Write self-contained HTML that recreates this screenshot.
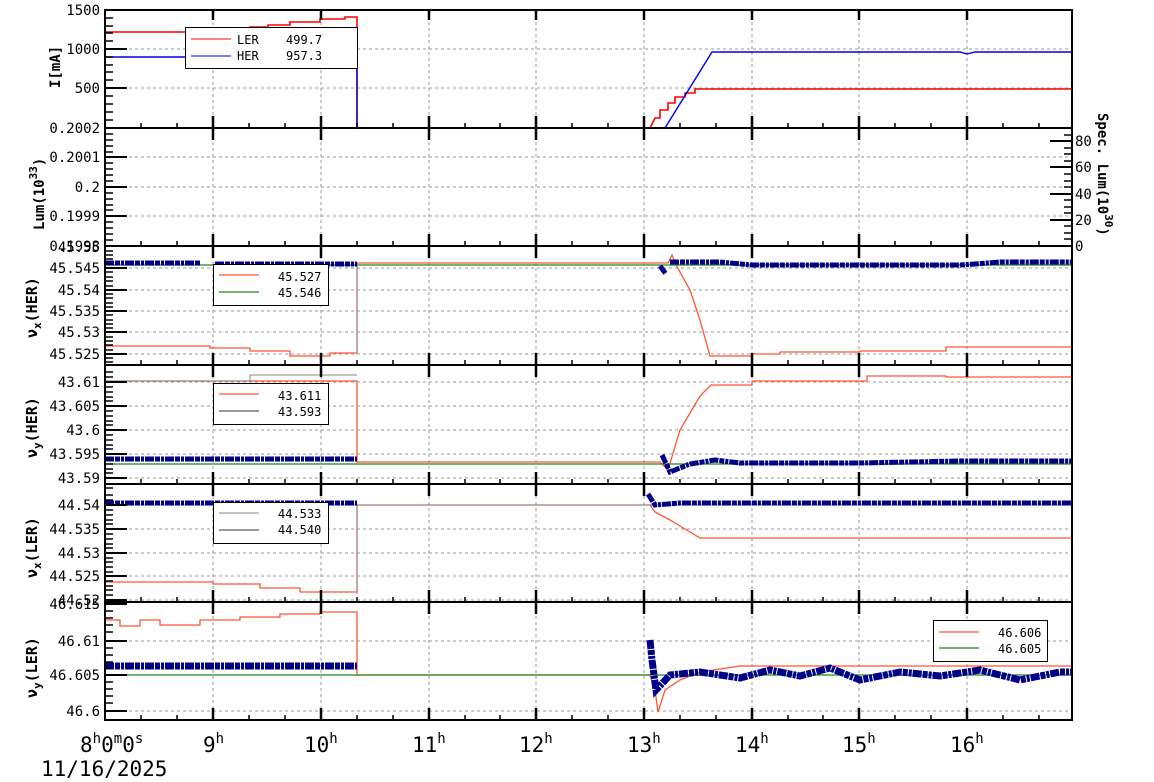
<!DOCTYPE html>
<html><head><meta charset="utf-8"><style>
html,body{margin:0;padding:0;background:#fff;width:1154px;height:782px;overflow:hidden}
svg{display:block}
text{font-family:"DejaVu Sans Mono","Liberation Mono",monospace;fill:#000}
.t{font-size:14px}
.g{stroke:#999;stroke-width:1;stroke-dasharray:3,3;fill:none}
.ax{stroke:#000;stroke-width:2;fill:none}
.r{stroke:#ff5533;stroke-width:1.3;fill:none}
.rr{stroke:#f00;stroke-width:1.6;fill:none}
.b{stroke:#0000ee;stroke-width:1.4;fill:none}
.gr{stroke:#1a8a1a;stroke-width:1.3;fill:none}
.gy{stroke:#888;stroke-width:1;fill:none}
.d{stroke:#000088;stroke-width:5;fill:none;stroke-dasharray:9,1,5,1,3,1}
</style></head><body>
<svg width="1154" height="782" viewBox="0 0 1154 782" xmlns="http://www.w3.org/2000/svg">
<g class="g">
<path d="M213 10V720M321 10V720M429 10V720M536 10V720M644 10V720M752 10V720M859 10V720M967 10V720"/>
<path d="M105 49H1072M105 88H1072"/>
<path d="M105 157H1072M105 187H1072M105 216H1072"/>
<path d="M105 268H1072M105 290H1072M105 311H1072M105 332H1072M105 354H1072"/>
<path d="M105 382H1072M105 406H1072M105 430H1072M105 454H1072M105 478H1072"/>
<path d="M105 529H1072M105 553H1072M105 576H1072M105 600H1072"/>
<path d="M105 641H1072M105 711H1072"/>
</g>

<path class="rr" d="M105 32H213V29H250V27H268V25H290V22H320V19H345V17H357V128H650L655 118H660V110H668V103H675V97H685V93H695V89H1072"/>
<path class="b" d="M105 57H213V55H250V52H268V49H290V48H330V50H357V128H665L712 52H960L967 54L975 52H1072"/>
<rect x="185.5" y="27.5" width="172" height="41" fill="#fff" stroke="#000"/>
<line x1="191" y1="39" x2="231" y2="39" stroke="#f00"/>
<line x1="191" y1="56" x2="231" y2="56" stroke="#00e"/>
<text x="237" y="44" style="font-size:12px">LER</text>
<text x="286" y="44" style="font-size:12px">499.7</text>
<text x="237" y="60" style="font-size:12px">HER</text>
<text x="286" y="60" style="font-size:12px">957.3</text>

<path class="r" d="M105 346H210V348H250V351H290V356H330V353H357V263H668L672 255L676 265L690 290L700 320L710 356H752V354H780V352H860V351H946V347H1072"/>
<path class="gy" d="M357 263V354"/>
<path class="gr" d="M105 265H1072"/>
<path class="d" d="M105 263H200M215 264H357M660 266L666 274M670 262H720L752 265H960L975 264L1000 262H1072"/>
<rect x="213.5" y="264.5" width="115" height="41" fill="#fff" stroke="#000"/>
<line x1="219" y1="275" x2="259" y2="275" class="r"/>
<line x1="219" y1="292" x2="259" y2="292" class="gr"/>
<text x="278" y="281" style="font-size:12px">45.527</text>
<text x="278" y="297" style="font-size:12px">45.546</text>

<path class="r" d="M105 381H357V462H660L668 470L680 430L700 396L711 385H752V381H867V376H946V377H1072"/>
<path class="gy" d="M105 381H250V375H357"/>
<path class="gr" d="M105 464H1072"/>
<path class="d" d="M105 459H357M662 455L670 472L690 464L715 460L740 463H860L960 461H1072"/>
<rect x="213.5" y="383.5" width="115" height="41" fill="#fff" stroke="#000"/>
<line x1="219" y1="394" x2="259" y2="394" class="r"/>
<line x1="219" y1="411" x2="259" y2="411" stroke="#333"/>
<text x="278" y="400" style="font-size:12px">43.611</text>
<text x="278" y="416" style="font-size:12px">43.593</text>

<path class="r" d="M105 582H213V584H260V588H300V592H357V505H650L655 512L670 520L680 526L700 538H1072"/>
<path class="gy" d="M105 505H1072M357 505V594"/>
<path class="d" d="M105 503H357M648 494L655 505L680 503H1072"/>
<rect x="213.5" y="502.5" width="115" height="41" fill="#fff" stroke="#000"/>
<line x1="219" y1="513" x2="259" y2="513" class="gy"/>
<line x1="219" y1="530" x2="259" y2="530" stroke="#333"/>
<text x="278" y="518" style="font-size:12px">44.533</text>
<text x="278" y="534" style="font-size:12px">44.540</text>

<path class="r" d="M105 620H120V626H140V620H160V625H200V620H240V617H280V614H320V612H357V675H650L655 690L658 712L665 690L680 680L700 672L740 666H800L860 666H1072"/>
<path class="gr" d="M105 675H1072"/>
<path class="d" style="stroke-width:7" d="M105 666H357M650 640L652 660L656 690L670 675L700 672L740 678L770 670L800 676L830 668L860 680L900 672L940 676L980 670L1020 680L1060 672H1072"/>
<rect x="933.5" y="620.5" width="114" height="41" fill="#fff" stroke="#000"/>
<line x1="939" y1="632" x2="979" y2="632" class="r"/>
<line x1="939" y1="648" x2="979" y2="648" class="gr"/>
<text x="998" y="637" style="font-size:12px">46.606</text>
<text x="998" y="653" style="font-size:12px">46.605</text>

<g class="ax">
<rect x="105" y="10" width="967" height="710"/>
<path d="M105 128H1072M105 246H1072M105 365H1072M105 484H1072M105 602H1072"/>
</g>
<g stroke="#000" stroke-width="2">
<path d="M105 10h22M105 49h22M105 88h22M105 157h22M105 187h22M105 216h22M105 268h22M105 290h22M105 311h22M105 332h22M105 354h22M105 382h22M105 406h22M105 430h22M105 454h22M105 478h22M105 505h22M105 529h22M105 553h22M105 576h22M105 600h22M105 604h22M105 641h22M105 675h22M105 711h22"/>
<path d="M1072 141h-22M1072 167h-22M1072 194h-22M1072 220h-22M1072 246h-22"/>
</g>
<g stroke="#000" stroke-width="1.5">
<path d="M105 18h8M105 26h8M105 33h8M105 41h8M105 57h8M105 65h8M105 72h8M105 80h8M105 96h8M105 104h8M105 112h8M105 120h8M105 134h8M105 140h8M105 146h8M105 152h8M105 163h8M105 169h8M105 175h8M105 181h8M105 193h8M105 199h8M105 205h8M105 210h8M105 222h8M105 228h8M105 234h8M105 240h8M105 251h8M105 255h8M105 259h8M105 264h8M105 272h8M105 277h8M105 281h8M105 286h8M105 294h8M105 298h8M105 303h8M105 307h8M105 315h8M105 320h8M105 324h8M105 328h8M105 337h8M105 341h8M105 345h8M105 350h8M105 358h8M105 362h8M105 372h8M105 377h8M105 387h8M105 392h8M105 397h8M105 401h8M105 411h8M105 416h8M105 421h8M105 425h8M105 435h8M105 440h8M105 445h8M105 449h8M105 459h8M105 464h8M105 469h8M105 473h8M105 488h8M105 495h8M105 500h8M105 510h8M105 515h8M105 520h8M105 524h8M105 534h8M105 539h8M105 544h8M105 548h8M105 558h8M105 562h8M105 567h8M105 572h8M105 581h8M105 586h8M105 590h8M105 595h8M105 611h8M105 618h8M105 625h8M105 632h8M105 648h8M105 655h8M105 662h8M105 668h8M105 682h8M105 689h8M105 696h8M105 703h8"/>
<path d="M1072 135h-8M1072 148h-8M1072 154h-8M1072 161h-8M1072 174h-8M1072 181h-8M1072 187h-8M1072 200h-8M1072 207h-8M1072 213h-8M1072 226h-8M1072 233h-8M1072 239h-8"/>
</g>
<g stroke="#000" stroke-width="2.5">
<path d="M213 10v10M321 10v10M429 10v10M536 10v10M644 10v10M752 10v10M859 10v10M967 10v10"/>
<path d="M213 128v-12M321 128v-12M429 128v-12M536 128v-12M644 128v-12M752 128v-12M859 128v-12M967 128v-12M213 246v-12M321 246v-12M429 246v-12M536 246v-12M644 246v-12M752 246v-12M859 246v-12M967 246v-12M213 365v-12M321 365v-12M429 365v-12M536 365v-12M644 365v-12M752 365v-12M859 365v-12M967 365v-12M213 484v-12M321 484v-12M429 484v-12M536 484v-12M644 484v-12M752 484v-12M859 484v-12M967 484v-12M213 602v-12M321 602v-12M429 602v-12M536 602v-12M644 602v-12M752 602v-12M859 602v-12M967 602v-12M213 720v-12M321 720v-12M429 720v-12M536 720v-12M644 720v-12M752 720v-12M859 720v-12M967 720v-12"/>
<path d="M213 128v12M321 128v12M429 128v12M536 128v12M644 128v12M752 128v12M859 128v12M967 128v12M213 246v12M321 246v12M429 246v12M536 246v12M644 246v12M752 246v12M859 246v12M967 246v12M213 365v12M321 365v12M429 365v12M536 365v12M644 365v12M752 365v12M859 365v12M967 365v12M213 484v12M321 484v12M429 484v12M536 484v12M644 484v12M752 484v12M859 484v12M967 484v12M213 602v12M321 602v12M429 602v12M536 602v12M644 602v12M752 602v12M859 602v12M967 602v12"/>
</g>
<g stroke="#000" stroke-width="1.5">
<path d="M141 128v-5M177 128v-5M249 128v-5M285 128v-5M357 128v-5M393 128v-5M465 128v-5M500 128v-5M572 128v-5M608 128v-5M680 128v-5M716 128v-5M788 128v-5M823 128v-5M895 128v-5M931 128v-5M1003 128v-5M1039 128v-5"/>
<path d="M141 246v-5M177 246v-5M249 246v-5M285 246v-5M357 246v-5M393 246v-5M465 246v-5M500 246v-5M572 246v-5M608 246v-5M680 246v-5M716 246v-5M788 246v-5M823 246v-5M895 246v-5M931 246v-5M1003 246v-5M1039 246v-5"/>
<path d="M141 365v-5M177 365v-5M249 365v-5M285 365v-5M357 365v-5M393 365v-5M465 365v-5M500 365v-5M572 365v-5M608 365v-5M680 365v-5M716 365v-5M788 365v-5M823 365v-5M895 365v-5M931 365v-5M1003 365v-5M1039 365v-5"/>
<path d="M141 484v-5M177 484v-5M249 484v-5M285 484v-5M357 484v-5M393 484v-5M465 484v-5M500 484v-5M572 484v-5M608 484v-5M680 484v-5M716 484v-5M788 484v-5M823 484v-5M895 484v-5M931 484v-5M1003 484v-5M1039 484v-5"/>
<path d="M141 602v-5M177 602v-5M249 602v-5M285 602v-5M357 602v-5M393 602v-5M465 602v-5M500 602v-5M572 602v-5M608 602v-5M680 602v-5M716 602v-5M788 602v-5M823 602v-5M895 602v-5M931 602v-5M1003 602v-5M1039 602v-5"/>
<path d="M141 720v-5M177 720v-5M249 720v-5M285 720v-5M357 720v-5M393 720v-5M465 720v-5M500 720v-5M572 720v-5M608 720v-5M680 720v-5M716 720v-5M788 720v-5M823 720v-5M895 720v-5M931 720v-5M1003 720v-5M1039 720v-5"/>
</g>

<g class="t" text-anchor="end">
<text x="100" y="15">1500</text><text x="100" y="54">1000</text><text x="100" y="93">500</text>
<text x="100" y="133">0.2002</text><text x="100" y="162">0.2001</text><text x="100" y="192">0.2</text><text x="100" y="221">0.1999</text><text x="100" y="251">0.1998</text>
<text x="100" y="252">45.55</text>
<text x="100" y="273">45.545</text><text x="100" y="295">45.54</text><text x="100" y="316">45.535</text><text x="100" y="337">45.53</text><text x="100" y="359">45.525</text>
<text x="100" y="387">43.61</text><text x="100" y="411">43.605</text><text x="100" y="435">43.6</text><text x="100" y="459">43.595</text><text x="100" y="483">43.59</text>
<text x="100" y="510">44.54</text><text x="100" y="534">44.535</text><text x="100" y="558">44.53</text><text x="100" y="581">44.525</text><text x="100" y="605">44.52</text>
<text x="100" y="609">46.615</text><text x="100" y="646">46.61</text><text x="100" y="680">46.605</text><text x="100" y="716">46.6</text>
</g>
<g class="t">
<text x="1075" y="146">80</text><text x="1075" y="172">60</text><text x="1075" y="199">40</text><text x="1075" y="225">20</text><text x="1075" y="251">0</text>
</g>
<g style="font-size:14px;font-weight:bold">
<text transform="translate(60,88) rotate(-90)">I[mA]</text>
<text transform="translate(44,230) rotate(-90)">Lum(10<tspan dy="-7" style="font-size:11px">33</tspan><tspan dy="7">)</tspan></text>
<text transform="translate(37,338) rotate(-90)" style="font-size:15px">ν<tspan dy="4" style="font-size:11px">x</tspan><tspan dy="-4">(HER)</tspan></text>
<text transform="translate(37,458) rotate(-90)" style="font-size:15px">ν<tspan dy="4" style="font-size:11px">y</tspan><tspan dy="-4">(HER)</tspan></text>
<text transform="translate(37,578) rotate(-90)" style="font-size:15px">ν<tspan dy="4" style="font-size:11px">x</tspan><tspan dy="-4">(LER)</tspan></text>
<text transform="translate(37,698) rotate(-90)" style="font-size:15px">ν<tspan dy="4" style="font-size:11px">y</tspan><tspan dy="-4">(LER)</tspan></text>
<text transform="translate(1098,113) rotate(90)">Spec. Lum(10<tspan dy="-7" style="font-size:11px">30</tspan><tspan dy="7">)</tspan></text>
</g>
<g style="font-size:21px">
<text x="80" y="752">8<tspan dy="-9" style="font-size:14px">h</tspan><tspan dy="9">0</tspan><tspan dy="-9" style="font-size:14px">m</tspan><tspan dy="9">0</tspan><tspan dy="-9" style="font-size:14px">s</tspan></text>
<text x="203" y="752">9<tspan dy="-9" style="font-size:14px">h</tspan></text>
<text x="304" y="752">10<tspan dy="-9" style="font-size:14px">h</tspan></text>
<text x="412" y="752">11<tspan dy="-9" style="font-size:14px">h</tspan></text>
<text x="519" y="752">12<tspan dy="-9" style="font-size:14px">h</tspan></text>
<text x="627" y="752">13<tspan dy="-9" style="font-size:14px">h</tspan></text>
<text x="735" y="752">14<tspan dy="-9" style="font-size:14px">h</tspan></text>
<text x="842" y="752">15<tspan dy="-9" style="font-size:14px">h</tspan></text>
<text x="950" y="752">16<tspan dy="-9" style="font-size:14px">h</tspan></text>
<text x="41" y="776">11/16/2025</text>
</g>
</svg>
</body></html>
